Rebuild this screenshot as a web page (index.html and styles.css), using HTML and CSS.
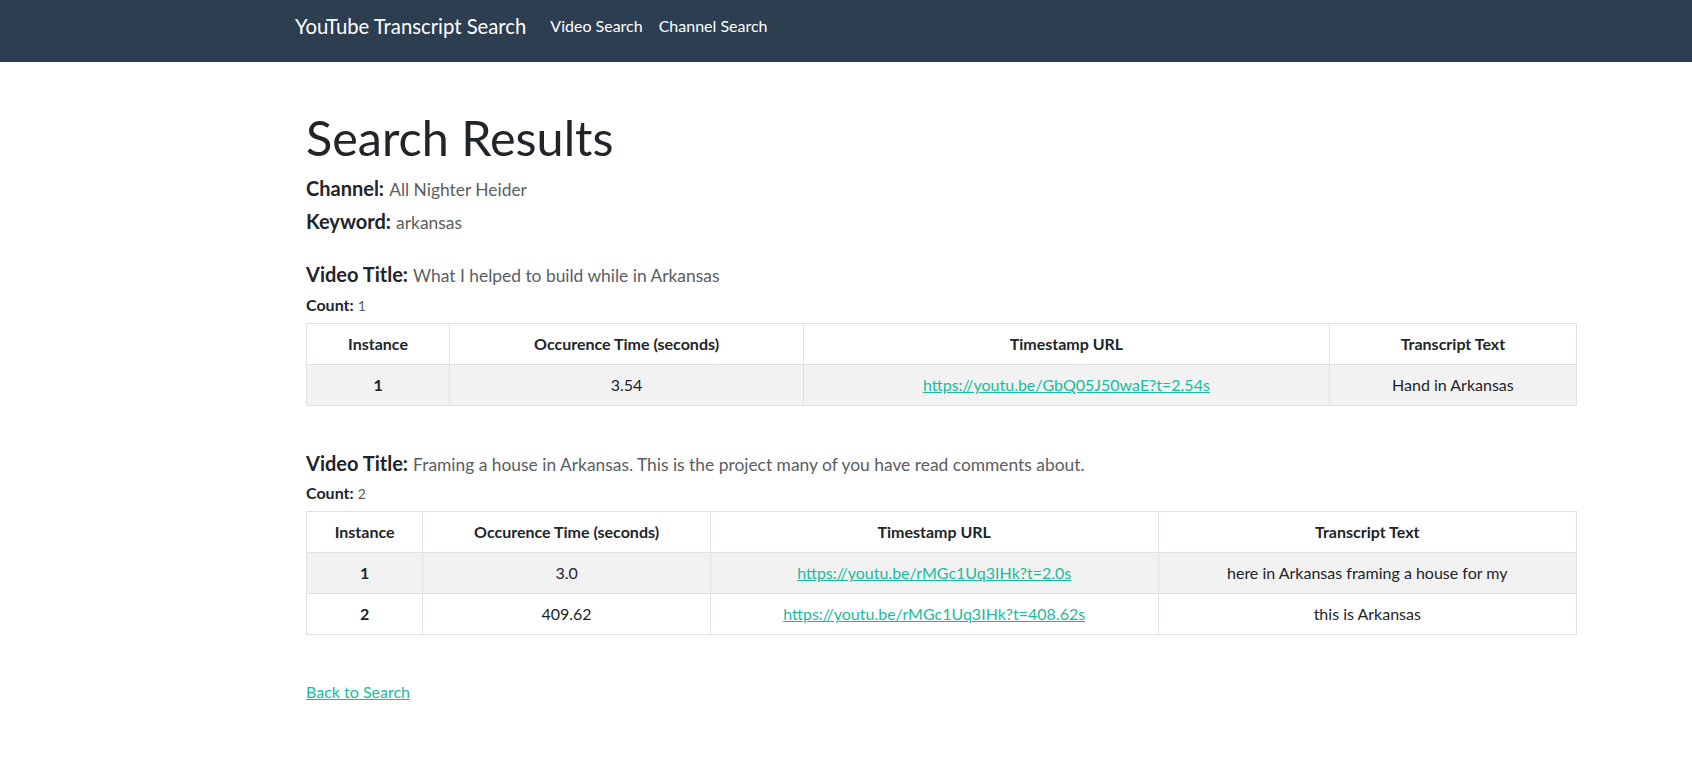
FILE: index.html
```html
<!DOCTYPE html>
<html lang="en">
<head>
<meta charset="utf-8">
<title>YouTube Transcript Search</title>
<link rel="stylesheet" href="styles.css">
</head>
<body>
<nav class="navbar">
  <a class="brand" href="#">YouTube Transcript Search</a>
  <ul class="nav">
    <li><a class="nav-link" href="#">Video Search</a></li>
    <li><a class="nav-link" href="#">Channel Search</a></li>
  </ul>
</nav>
<main class="page">
  <h1 class="title">Search Results</h1>
  <h5 class="meta"><span class="label">Channel:</span> <small class="muted">All Nighter Heider</small></h5>
  <h5 class="meta"><span class="label">Keyword:</span> <small class="muted">arkansas</small></h5>

  <section class="results">
    <div class="result">
      <h5 class="meta"><span class="label">Video Title:</span> <small class="muted">What I helped to build while in Arkansas</small></h5>
      <h6 class="count"><span class="label">Count:</span> <small class="muted">1</small></h6>
      <table class="table">
        <thead>
          <tr><th>Instance</th><th>Occurence Time (seconds)</th><th>Timestamp URL</th><th>Transcript Text</th></tr>
        </thead>
        <tbody>
          <tr class="odd"><th>1</th><td>3.54</td><td><a href="#">https://youtu.be/GbQ05J50waE?t=2.54s</a></td><td>Hand in Arkansas</td></tr>
        </tbody>
      </table>
    </div>

    <div class="result">
      <h5 class="meta"><span class="label">Video Title:</span> <small class="muted">Framing a house in Arkansas. This is the project many of you have read comments about.</small></h5>
      <h6 class="count"><span class="label">Count:</span> <small class="muted">2</small></h6>
      <table class="table">
        <thead>
          <tr><th>Instance</th><th>Occurence Time (seconds)</th><th>Timestamp URL</th><th>Transcript Text</th></tr>
        </thead>
        <tbody>
          <tr class="odd"><th>1</th><td>3.0</td><td><a href="#">https://youtu.be/rMGc1Uq3IHk?t=2.0s</a></td><td>here in Arkansas framing a house for my</td></tr>
          <tr><th>2</th><td>409.62</td><td><a href="#">https://youtu.be/rMGc1Uq3IHk?t=408.62s</a></td><td>this is Arkansas</td></tr>
        </tbody>
      </table>
    </div>
  </section>

  <a class="back" href="#">Back to Search</a>
</main>
</body>
</html>
```

FILE: styles.css
```css
* { box-sizing: border-box; }

body {
  margin: 0;
  font-family: Lato, "Liberation Sans", sans-serif;
  font-size: 16px;
  line-height: 1.5;
  color: #212529;
  background: #fff;
}

a { color: #18bc9c; text-decoration: underline; }

.navbar {
  background: #2c3e50;
  height: 62px;
  display: flex;
  align-items: center;
  padding: 0 0 10px 295px;
}

.brand {
  color: #fff;
  font-size: 20.3px;
  line-height: 30px;
  text-decoration: none;
  margin-right: 16px;
}

.nav {
  display: flex;
  list-style: none;
  margin: 0;
  padding: 0;
}

.nav-link {
  display: block;
  color: #fff;
  text-decoration: none;
  padding: 4px 8px;
  font-size: 16px;
}

.page {
  width: 1271px;
  margin-left: 306px;
  padding-top: 46px;
  padding-bottom: 40px;
}

.title {
  font-size: 48.5px;
  font-weight: 400;
  line-height: 1.2;
  margin: 0 0 10px;
}

.meta {
  font-size: 20px;
  line-height: 1.2;
  font-weight: 400;
  margin: 0 0 8px;
}

.count {
  font-size: 16px;
  line-height: 1.2;
  font-weight: 400;
  margin: 0 0 8px;
}

.label { font-weight: 700; }

.meta .muted {
  font-size: 17.4px;
  color: #595e62;
}

.count .muted {
  font-size: 14px;
  color: #595e62;
}

.results { margin-top: 28px; }

.table {
  width: 100%;
  border-collapse: collapse;
  margin-bottom: 45px;
}

.table th,
.table td {
  border: 1px solid #dee2e6;
  padding: 8px 12px;
  line-height: 24px;
  text-align: center;
  vertical-align: top;
}

.table td { font-weight: 400; }
.table th { font-weight: 700; }

.table tr.odd { background: #f2f2f2; }

.back { display: inline-block; line-height: 22px; }
```
